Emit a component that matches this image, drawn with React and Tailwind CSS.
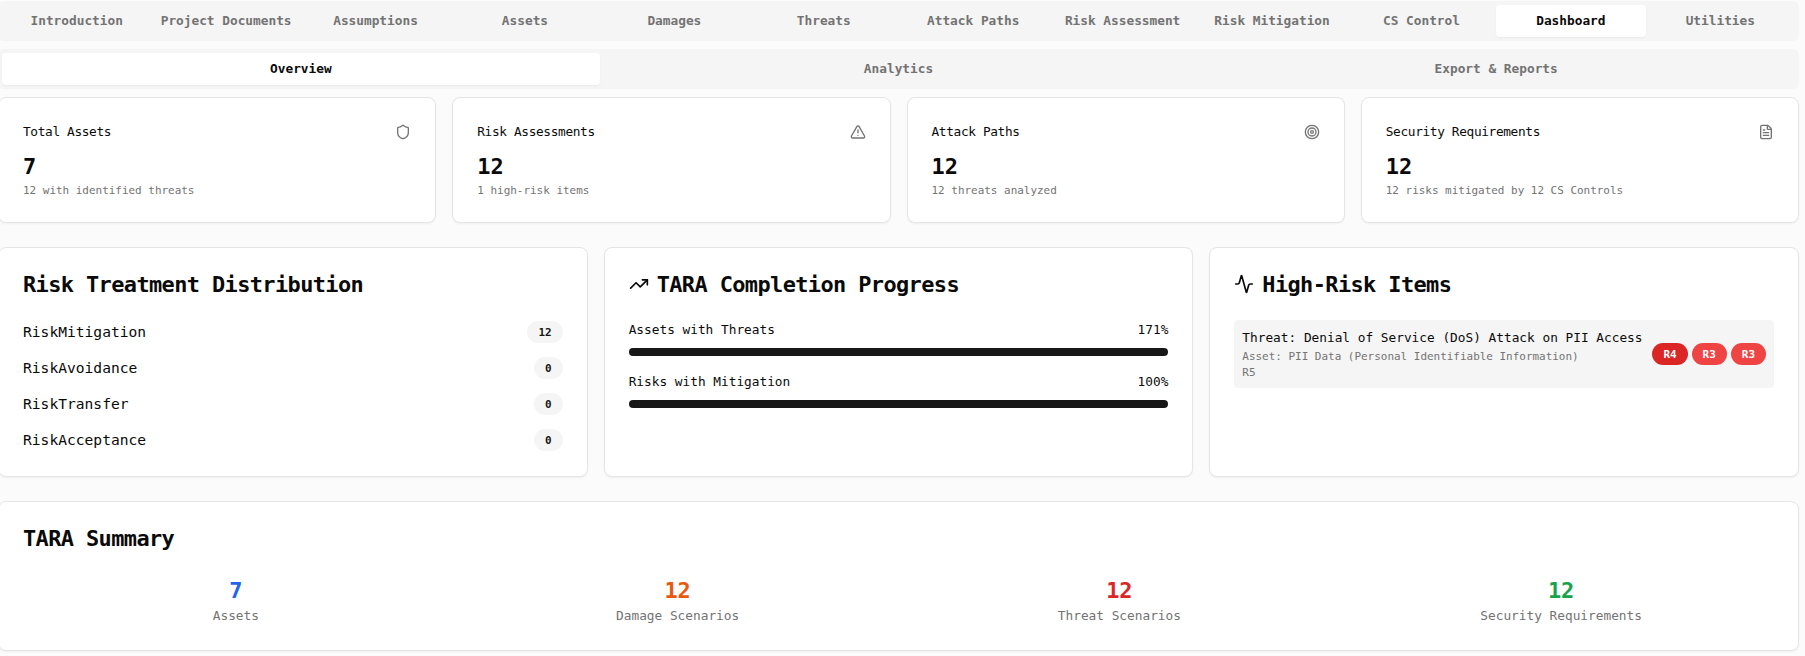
import { Shield, TriangleAlert, Target, FileText, TrendingUp, Activity } from "lucide-react";

const mainTabs = [
  "Introduction", "Project Documents", "Assumptions", "Assets", "Damages", "Threats",
  "Attack Paths", "Risk Assessment", "Risk Mitigation", "CS Control", "Dashboard", "Utilities",
];
const subTabs = ["Overview", "Analytics", "Export & Reports"];

const stats = [
  { title: "Total Assets", value: "7", note: "12 with identified threats", Icon: Shield },
  { title: "Risk Assessments", value: "12", note: "1 high-risk items", Icon: TriangleAlert },
  { title: "Attack Paths", value: "12", note: "12 threats analyzed", Icon: Target },
  { title: "Security Requirements", value: "12", note: "12 risks mitigated by 12 CS Controls", Icon: FileText },
];

const treatments = [
  ["RiskMitigation", 12],
  ["RiskAvoidance", 0],
  ["RiskTransfer", 0],
  ["RiskAcceptance", 0],
];

const progress = [
  ["Assets with Threats", 171],
  ["Risks with Mitigation", 100],
];

const summary = [
  ["7", "Assets", "text-[#2563eb]"],
  ["12", "Damage Scenarios", "text-[#ea580c]"],
  ["12", "Threat Scenarios", "text-[#dc2626]"],
  ["12", "Security Requirements", "text-[#16a34a]"],
];

function Tabs({ items, active, columns }) {
  return (
    <div className={`grid h-10 rounded-md bg-[#f5f5f5] p-1 text-[12.79px] leading-5 font-bold text-[#737373] ${columns}`}>
      {items.map((t) => (
        <button
          key={t}
          className={`flex items-center justify-center rounded-sm whitespace-nowrap ${t === active ? "bg-white text-[#0a0a0a] shadow-xs" : ""}`}
        >
          {t}
        </button>
      ))}
    </div>
  );
}

function Card({ children }) {
  return <div className="rounded-lg border border-[#e5e5e5] bg-white p-6 shadow-xs">{children}</div>;
}

function Title({ Icon, children }) {
  return (
    <h3 className="mb-6 flex h-6 items-center gap-2 text-[21.93px] leading-[23px] font-bold tracking-[-0.6px]">
      {Icon && <Icon className="size-5" />}
      <span className="pt-px">{children}</span>
    </h3>
  );
}

function Note({ children }) {
  return <p className="pt-px text-[10.96px] leading-[15px] text-[#737373]">{children}</p>;
}

function Figure({ className = "", children }) {
  return <div className={`pt-px text-[21.93px] leading-[31px] font-bold ${className}`}>{children}</div>;
}

function Badge({ className, children }) {
  return (
    <span className={`rounded-full border border-transparent px-2.5 pt-[3px] pb-0.5 text-[10.96px] leading-[15px] font-bold ${className}`}>
      {children}
    </span>
  );
}

export default function App() {
  return (
    <div className="h-[656px] overflow-hidden bg-[#fbfbfb] pt-px font-['DejaVu_Sans_Mono',monospace] text-[14.62px] leading-6 text-[#0a0a0a]">
      <div className="-ml-0.5 flex w-[1801px] flex-col">
        <Tabs items={mainTabs} active="Dashboard" columns="grid-cols-12" />
        <div className="mt-2">
          <Tabs items={subTabs} active="Overview" columns="grid-cols-3" />
        </div>

        <div className="mt-2 flex flex-col gap-6">
          <div className="grid grid-cols-4 gap-4">
            {stats.map(({ title, value, note, Icon }) => (
              <Card key={title}>
                <div className="flex items-center justify-between pb-2">
                  <h3 className="text-[12.79px] leading-5 tracking-[-0.35px]">{title}</h3>
                  <Icon className="size-4 text-[#737373]" />
                </div>
                <Figure>{value}</Figure>
                <Note>{note}</Note>
              </Card>
            ))}
          </div>

          <div className="grid grid-cols-3 gap-4">
            <Card>
              <Title>Risk Treatment Distribution</Title>
              <div className="space-y-3">
                {treatments.map(([name, count]) => (
                  <div key={name} className="flex items-center justify-between">
                    <span>{name}</span>
                    <Badge className="bg-[#f5f5f5] text-[#171717]">{count}</Badge>
                  </div>
                ))}
              </div>
            </Card>

            <Card>
              <Title Icon={TrendingUp}>TARA Completion Progress</Title>
              <div className="space-y-4">
                {progress.map(([name, pct]) => (
                  <div key={name}>
                    <div className="mb-2 flex justify-between text-[12.79px] leading-5">
                      <span>{name}</span>
                      <span>{pct}%</span>
                    </div>
                    <div className="h-2 overflow-hidden rounded-full bg-[#f5f5f5]">
                      <div className="h-full bg-[#171717]" style={{ width: `${Math.min(pct, 100)}%` }} />
                    </div>
                  </div>
                ))}
              </div>
            </Card>

            <Card>
              <Title Icon={Activity}>High-Risk Items</Title>
              <div className="flex items-center justify-between rounded-sm bg-[#f5f5f5] p-2">
                <div className="whitespace-nowrap">
                  <p className="text-[12.79px] leading-5">Threat: Denial of Service (DoS) Attack on PII Access</p>
                  <Note>Asset: PII Data (Personal Identifiable Information)</Note>
                  <Note>R5</Note>
                </div>
                <div className="flex gap-1">
                  <Badge className="bg-[#dc2626] text-white">R4</Badge>
                  <Badge className="bg-[#ef4444] text-white">R3</Badge>
                  <Badge className="bg-[#ef4444] text-white">R3</Badge>
                </div>
              </div>
            </Card>
          </div>

          <Card>
            <Title>TARA Summary</Title>
            <div className="grid grid-cols-4 gap-4 text-center">
              {summary.map(([value, label, color]) => (
                <div key={label}>
                  <Figure className={color}>{value}</Figure>
                  <div className="text-[12.79px] leading-5 text-[#737373]">{label}</div>
                </div>
              ))}
            </div>
          </Card>
        </div>
      </div>
    </div>
  );
}
